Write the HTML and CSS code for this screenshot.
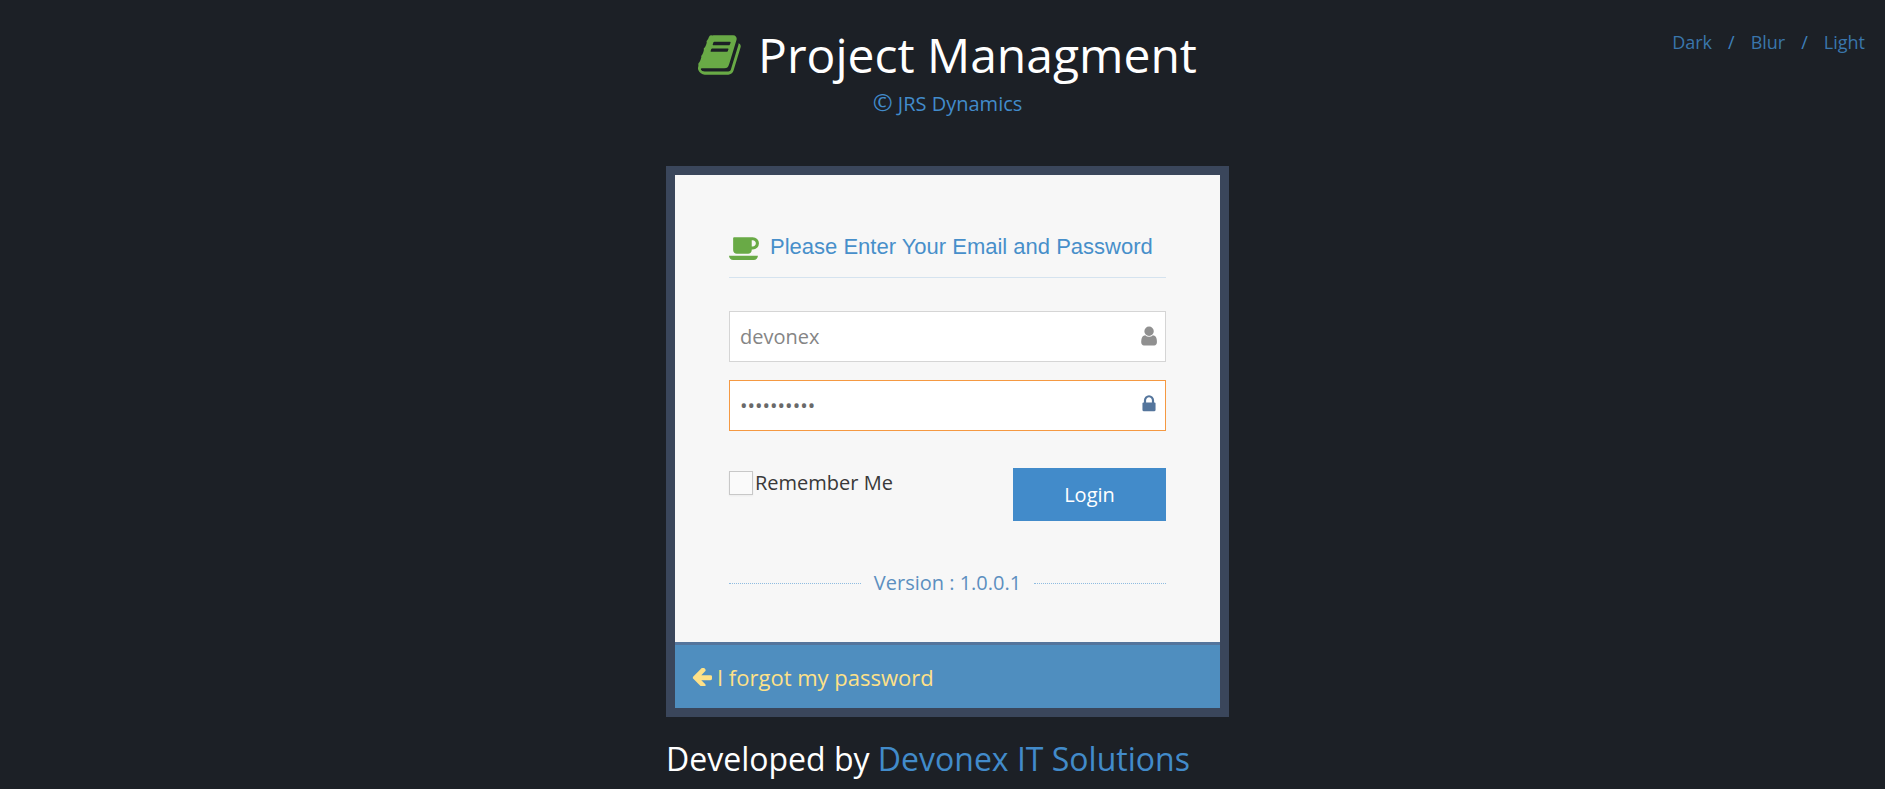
FILE: index.html
```html
<!DOCTYPE html>
<html lang="en">
<head>
<meta charset="utf-8">
<title>Project Managment</title>
<link rel="stylesheet" href="styles.css">
</head>
<body>
<nav class="themes"><a href="#">Dark</a><span>/</span><a href="#">Blur</a><span>/</span><a href="#">Light</a></nav>
<main class="page">
  <header class="brand">
    <h1 class="brand-title">
      <svg class="book" viewBox="0 0 1792 1792" aria-hidden="true"><path d="M1639 478q40 57 18 129l-275 906q-19 64-76.5 107.5t-122.5 43.5h-923q-77 0-148.5-53.5t-99.5-131.5q-24-67-2-127 0-4 3-27t4-37q1-8-3-21.5t-3-19.5q2-11 8-21t16.5-23.5 16.5-23.5q23-38 45-91.5t30-91.5q3-10 .5-30t-.5-28q3-11 17-28t17-23q21-36 42-92t25-90q1-9-2.5-32t.5-28q4-13 22-30.5t22-22.5q19-26 42.5-84.5t27.5-96.5q1-8-3-25.5t-2-26.5q2-8 9-18t18-23 17-21q8-12 16.5-30.5t15-35 16-36 19.5-32 26.5-23.5 36-11.5 47.5 5.5l-1 3q38-9 51-9h761q74 0 114 56t18 130l-274 906q-36 119-71.5 153.5t-128.5 34.5h-869q-27 0-38 15-11 16-1 43 24 70 144 70h923q29 0 56-15.5t35-41.5l300-987q7-22 5-57 38 15 59 43zm-1064 2q-4 13 2 22.5t20 9.5h608q13 0 25.5-9.5t16.5-22.5l21-64q4-13-2-22.5t-20-9.5h-608q-13 0-25.5 9.5t-16.5 22.5zm-83 256q-4 13 2 22.5t20 9.5h608q13 0 25.5-9.5t16.5-22.5l21-64q4-13-2-22.5t-20-9.5h-608q-13 0-25.5 9.5t-16.5 22.5z"/></svg>
      Project Managment
    </h1>
    <p class="brand-sub"><span class="copy">©</span> JRS Dynamics</p>
  </header>

  <section class="card">
    <form class="card-body">
      <h2 class="card-head">
        <svg class="cup" viewBox="0 0 1920 1792" aria-hidden="true"><path d="M1664 640q0-80-56-136t-136-56h-64v384h64q80 0 136-56t56-136zm-1664 768h1792q0 106-75 181t-181 75h-1280q-106 0-181-75t-75-181zm1856-768q0 159-112.5 271.5t-271.5 112.5h-64v32q0 92-66 158t-158 66h-704q-92 0-158-66t-66-158v-736q0-26 19-45t45-19h1152q159 0 271.5 112.5t112.5 271.5z"/></svg>
        Please Enter Your Email and Password
      </h2>
      <div class="field">
        <input class="input" type="text" value="devonex" aria-label="Email">
        <svg class="field-icon user" viewBox="0 0 1536 1792" aria-hidden="true"><path d="M1536 1399q0 109-62.5 187t-150.5 78h-854q-88 0-150.5-78t-62.5-187q0-85 8.5-160.5t31.5-152 58.5-131 94-89 134.5-34.5q131 128 313 128t313-128q76 0 134.5 34.5t94 89 58.5 131 31.5 152 8.5 160.5zm-256-887q0 159-112.5 271.5t-271.5 112.5-271.5-112.5-112.5-271.5 112.5-271.5 271.5-112.5 271.5 112.5 112.5 271.5z"/></svg>
      </div>
      <div class="field">
        <input class="input input-active" type="password" value="devonex123" aria-label="Password">
        <svg class="field-icon lock" viewBox="192 192 1408 1344" aria-hidden="true"><path d="M640 768h512v-192q0-106-75-181t-181-75-181 75-75 181v192zm832 96v576q0 40-28 68t-68 28h-960q-40 0-68-28t-28-68v-576q0-40 28-68t68-28h32v-192q0-184 132-316t316-132 316 132 132 316v192h32q40 0 68 28t28 68z"/></svg>
      </div>
      <div class="actions">
        <label class="remember"><span class="box"></span>Remember Me</label>
        <button class="login" type="button">Login</button>
      </div>
      <div class="version"><span>Version : 1.0.0.1</span></div>
    </form>
    <div class="card-foot">
      <a href="#" class="forgot">
        <svg class="arrow" viewBox="128 256 1536 1312" aria-hidden="true"><path d="M1664 896v128q0 53-32.5 90.5t-84.5 37.5h-704l293 294q38 36 38 90t-38 90l-75 76q-37 37-90 37-52 0-91-37l-651-652q-37-37-37-90 0-52 37-91l651-650q38-38 91-38 52 0 90 38l75 74q38 38 38 91t-38 91l-293 293h704q52 0 84.5 37.5t32.5 90.5z"/></svg>
        I forgot my password
      </a>
    </div>
  </section>

  <p class="credit">Developed by <a href="#">Devonex IT Solutions</a></p>
</main>
</body>
</html>
```
FILE: styles.css
```css
* { box-sizing: border-box; }
html, body { height: 100%; }
body {
  margin: 0;
  background: #1c2026;
  font-family: "Open Sans", sans-serif;
  overflow: hidden;
}
a { text-decoration: none; }

.themes {
  position: absolute;
  top: 29px;
  right: 20px;
  display: flex;
  gap: 16px;
  font-size: 18px;
  line-height: 26px;
  color: #3f80bd;
}
.themes a { color: #3a76ac; }

.page {
  width: 563px;
  margin: 0 0 0 666px;
  display: flex;
  flex-direction: column;
}
.brand { height: 166px; text-align: center; white-space: nowrap; }
.brand-title {
  margin: 0;
  padding-top: 22px;
  font-size: 48px;
  line-height: 66px;
  font-weight: 400;
  color: #fff;
  display: flex;
  justify-content: center;
  align-items: center;
  gap: 14px;
}
.book { width: 46px; height: 46px; fill: #69aa46; flex: none; }
.brand-sub {
  margin: 0;
  font-size: 20px;
  line-height: 28px;
  color: #428bca;
}
.copy { font-size: 24px; }

.card {
  border: 9px solid #3a465b;
  display: flex;
  flex-direction: column;
  height: 551px;
}
.card-body {
  background: #f7f7f7;
  flex: 1;
  padding: 50px 54px 0;
  border-bottom: 3px solid #54759c;
}
.card-head {
  margin: 0 0 33px;
  height: 53px;
  display: flex;
  align-items: center;
  gap: 10px;
  padding-bottom: 8px;
  border-bottom: 1px solid #d5e3ef;
  font-family: "Liberation Sans", Arial, sans-serif;
  font-size: 22px;
  font-weight: 400;
  color: #478fca;
}
.cup { width: 31px; height: 29px; fill: #69aa46; flex: none; }

.field { position: relative; margin-bottom: 18px; }
.input {
  display: block;
  width: 100%;
  height: 51px;
  padding: 0 44px 0 10px;
  border: 1px solid #d5d5d5;
  border-radius: 0;
  background: #fff;
  outline: none;
  font-family: "Open Sans", sans-serif;
  font-size: 20px;
  color: #858585;
}
.input-active { border-color: #f59942; color: #696969; }
.field-icon { position: absolute; right: 9px; top: 14px; }
.user { width: 19px; height: 22px; fill: #909090; }
.lock { width: 16px; height: 19px; top: 14px; fill: #54759c; }

.actions {
  display: flex;
  justify-content: space-between;
  align-items: flex-start;
  margin-top: 37px;
}
.remember {
  display: flex;
  align-items: center;
  margin-top: 3px;
  font-size: 20px;
  line-height: 24px;
  color: #393939;
}
.box {
  width: 24px;
  height: 24px;
  margin-right: 2px;
  background: #fafafa;
  border: 1px solid #c8c8c8;
  box-shadow: 0 1px 2px rgba(0,0,0,.05);
}
.login {
  width: 153px;
  height: 53px;
  border: 0;
  background: #428bca;
  color: #fff;
  font-family: "Open Sans", sans-serif;
  font-size: 20px;
}

.version {
  display: flex;
  align-items: center;
  gap: 13px;
  margin-top: 46px;
  font-size: 20px;
  line-height: 32px;
  color: #5c8fc0;
}
.version::before, .version::after {
  content: "";
  flex: 1;
  border-top: 1px dotted #8fbce0;
}
.version span { flex: none; padding: 0 0; }

.card-foot {
  height: 63px;
  flex: none;
  background: #4f8ebf;
  display: flex;
  align-items: center;
  padding-left: 17px;
}
.forgot {
  display: flex;
  align-items: center;
  gap: 5px;
  font-size: 22px;
  color: #fee188;
}
.arrow { width: 20px; height: 18px; fill: #fee188; flex: none; }

.credit {
  margin: 20px 0 0;
  font-size: 32px;
  line-height: 44px;
  color: #fff;
  white-space: nowrap;
}
.credit a { color: #428bca; }
```
